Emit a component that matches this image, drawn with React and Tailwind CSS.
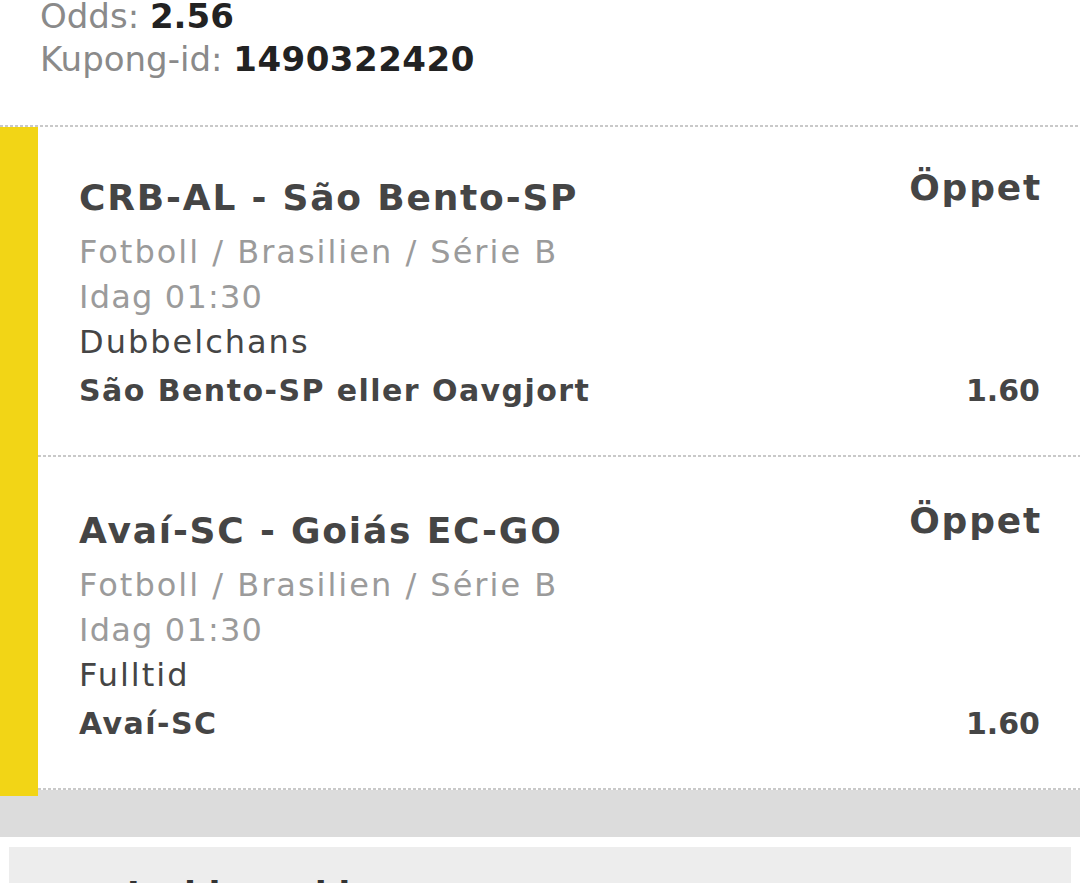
import React from 'react';

const selections = [
  {
    match: 'CRB-AL - São Bento-SP',
    league: 'Fotboll / Brasilien / Série B',
    time: 'Idag 01:30',
    market: 'Dubbelchans',
    pick: 'São Bento-SP eller Oavgjort',
    odds: '1.60',
  },
  {
    match: 'Avaí-SC - Goiás EC-GO',
    league: 'Fotboll / Brasilien / Série B',
    time: 'Idag 01:30',
    market: 'Fulltid',
    pick: 'Avaí-SC',
    odds: '1.60',
  },
];

const font = { fontFamily: '"DejaVu Sans", Inter, sans-serif' };

const Dots = () => (
  <div className="h-[2px] bg-[linear-gradient(to_right,#c9c9c9_60%,transparent_60%)] bg-[length:5px_2px]" />
);

const Selection = ({ s, first }) => (
  <div className="bg-white">
    <div className={`pl-[41px] pr-[40px] pb-[42px] ${first ? 'pt-[38px]' : 'pt-[41px]'}`}>
      <div className="flex justify-between items-start">
        <div className="text-[36px] leading-[45px] font-bold tracking-[1.8px] text-[#454545] mt-[10px]">{s.match}</div>
        <div className="text-[36px] leading-[45px] font-bold tracking-[1.8px] mr-[-2px] text-[#454545]">Öppet</div>
      </div>
      <div className="mt-[10px] text-[32px] leading-[45px] tracking-[2px] text-[#9b9b9b]">{s.league}</div>
      <div className="text-[32px] leading-[45px] tracking-[1.2px] text-[#9b9b9b]">{s.time}</div>
      <div className="text-[32px] leading-[45px] tracking-[2px] text-[#454545]">{s.market}</div>
      <div className="mt-[3px] flex justify-between text-[30px] leading-[45px] font-bold text-[#454545]">
        <span className="tracking-[1.45px]">{s.pick}</span>
        <span>{s.odds}</span>
      </div>
    </div>
    <Dots />
  </div>
);

export default function App() {
  return (
    <div className="w-[1080px] h-[883px] overflow-hidden bg-white" style={font}>
      <div className="px-[40px] mt-[-5px] pb-[44px] text-[34px] leading-[43px]">
        <div>
          <span className="text-[#8a8a8a]">Odds: </span>
          <span className="font-bold text-[#222]">2.56</span>
        </div>
        <div>
          <span className="text-[#8a8a8a]">Kupong-id: </span>
          <span className="font-bold tracking-[0.5px] text-[#222]">1490322420</span>
        </div>
      </div>
      <Dots />
      <div className="bg-[#dcdcdc]">
        <div className="border-l-[38px] border-[#f2d516] pb-[6px]">
          {selections.map((s, i) => (
            <Selection key={i} s={s} first={i === 0} />
          ))}
        </div>
        <div className="h-[41px]" />
      </div>
      <div className="h-[10px]" />
      <div className="mx-[9px] bg-[#ededed] h-[80px] pt-[27px] pl-[118px]">
        <div className="text-[34px] font-bold text-[#333] leading-[40px]">Ladda ned kupong</div>
      </div>
    </div>
  );
}
